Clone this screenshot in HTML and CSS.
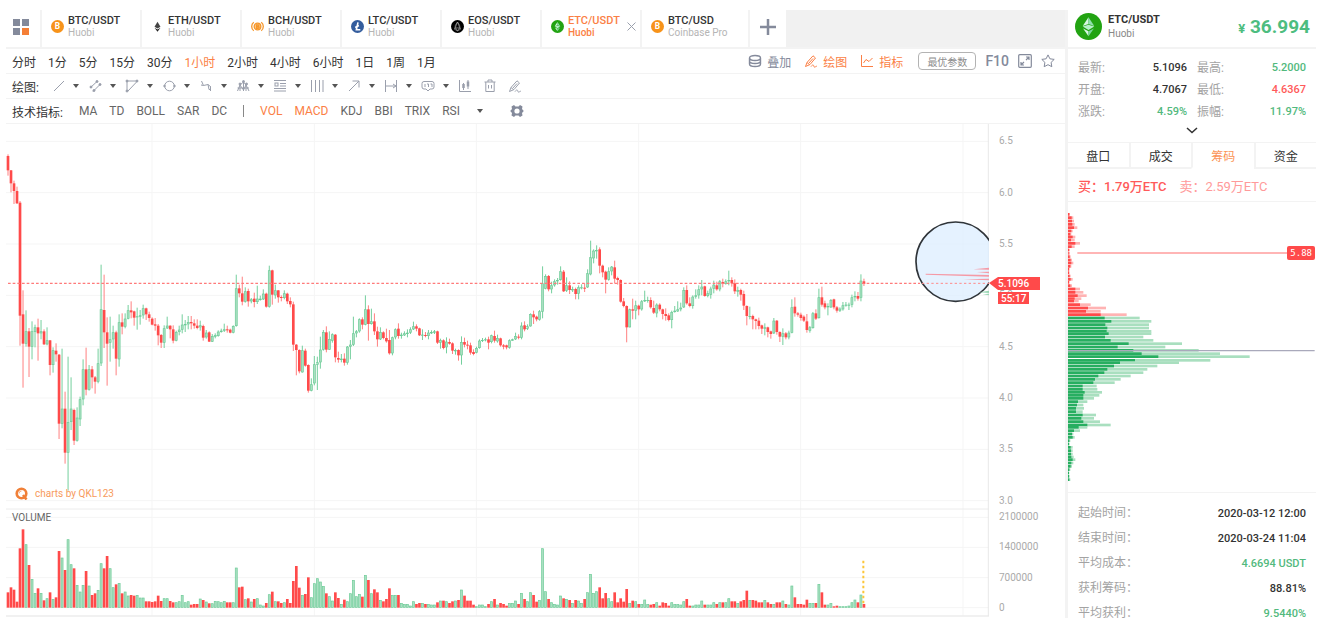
FILE: index.html
```html
<!DOCTYPE html>
<html lang="zh-CN">
<head>
    <meta charset="UTF-8">
    <meta name="viewport" content="width=device-width, initial-scale=1.0">
    <title>ETC/USDT Huobi</title>
    <link rel="stylesheet" href="styles.css">
</head>
<body>
    <!-- shared icons -->
    <svg class="sprite" aria-hidden="true">
        <symbol id="coin-etc" viewBox="0 0 28 28">
            <circle cx="14" cy="14" r="14" fill="#22a312"/>
            <path d="M14 4.500 8 13.500 14 11.500z" fill="#d9f7e4"/>
            <path d="M14 4.500 20 13.500 14 11.500z" fill="#8fe0ae"/>
            <path d="M8 14 14 12.200 20 14 14 17.500z" fill="#b7f0cb"/>
            <path d="M8.400 16 14 19 14 24z" fill="#d9f7e4"/>
            <path d="M19.600 16 14 19 14 24z" fill="#7bd69c"/>
        </symbol>
        <symbol id="pen" viewBox="0 0 14 14">
            <path d="M1.500 12.500 3 8.500 9 1.800 11.500 4 6 10.500 1.500 12.500M3 8.500 5.500 10.500M5 9 9 4.500M7 12.500c1.500-2 2.500-2 3 0s2-1 3 0" fill="none" stroke="currentColor"/>
        </symbol>
    </svg>

    <div class="app">
        <main class="main">
            <nav class="tabs">
                <button class="menu-btn" aria-label="菜单">
                    <svg width="18" height="18" viewBox="0 0 18 18">
                        <path d="M1 1h7v7H1zM10 1h7v7h-7zM1 10h7v7H1z" fill="#848a9b"/>
                        <path d="M10 10h7v7h-7z" fill="#f57f36"/>
                    </svg>
                </button>
                <div class="tab">
                    <svg class="coin" viewBox="0 0 14 14">
                        <circle cx="7" cy="7" r="7" fill="#f7931a"/>
                        <text class="coin-sign" x="7" y="10">B</text>
                    </svg>
                    <button class="pair">BTC/USDT<small>Huobi</small></button>
                </div>
                <div class="tab">
                    <svg class="coin" viewBox="0 0 14 14">
                        <path d="M7 2 10.200 7.300 7 9.200 3.800 7.300z" fill="#444"/>
                        <path d="M3.800 8.300 7 10.200 10.200 8.300 7 12.600z" fill="#222"/>
                    </svg>
                    <button class="pair">ETH/USDT<small>Huobi</small></button>
                </div>
                <div class="tab">
                    <svg class="coin" viewBox="0 0 14 14" fill="none" stroke="#f5962a" stroke-width="1.400">
                        <circle cx="7" cy="7" r="3.600" fill="#fbc98a"/>
                        <path d="M3 2.500C0 4.500 0 9.500 3 11.500M11 2.500C14 4.500 14 9.500 11 11.500M6 5.200h1.500a.8.8 0 0 1 0 1.800H6h1.800a.9.9 0 0 1 0 1.900H6z"/>
                    </svg>
                    <button class="pair">BCH/USDT<small>Huobi</small></button>
                </div>
                <div class="tab">
                    <svg class="coin" viewBox="0 0 14 14">
                        <circle cx="7" cy="7" r="7" fill="#345d9d"/>
                        <path d="M7.500 2.500 5.800 10.500H10M4.500 8 8.500 6" fill="none" stroke="#fff" stroke-width="1.700"/>
                    </svg>
                    <button class="pair">LTC/USDT<small>Huobi</small></button>
                </div>
                <div class="tab">
                    <svg class="coin" viewBox="0 0 14 14">
                        <circle cx="7" cy="7" r="7" fill="#000"/>
                        <path d="M7 2.200 4.800 5.500 4 10 7 11.800 10 10 9.200 5.500zM7 2.200 4 10M7 2.200 10 10M5 8.500 7 11.800 9 8.500z" fill="none" stroke="#bbb" stroke-width=".6"/>
                    </svg>
                    <button class="pair">EOS/USDT<small>Huobi</small></button>
                </div>
                <div class="tab active">
                    <svg class="coin"><use href="#coin-etc"/></svg>
                    <button class="pair">ETC/USDT<small>Huobi</small></button>
                    <button class="close" aria-label="关闭">
                        <svg width="9" height="9" viewBox="0 0 9 9"><path d="M.5.5l8 8M8.500.5l-8 8" stroke="#9a9fac"/></svg>
                    </button>
                </div>
                <div class="tab wide">
                    <svg class="coin" viewBox="0 0 14 14">
                        <circle cx="7" cy="7" r="7" fill="#f7931a"/>
                        <text class="coin-sign" x="7" y="10">B</text>
                    </svg>
                    <button class="pair">BTC/USD<small>Coinbase Pro</small></button>
                </div>
                <button class="add-btn" aria-label="添加">
                    <svg width="18" height="18" viewBox="0 0 18 18"><path d="M9 1v16M1 9h16" stroke="#848a9b" stroke-width="2.500"/></svg>
                </button>
            </nav>

            <div class="row">
                <div class="periods">
                    <button>分时</button>
                    <button>1分</button>
                    <button>5分</button>
                    <button>15分</button>
                    <button>30分</button>
                    <button class="active">1小时</button>
                    <button>2小时</button>
                    <button>4小时</button>
                    <button>6小时</button>
                    <button>1日</button>
                    <button>1周</button>
                    <button>1月</button>
                </div>
                <div class="tools">
                    <button class="tool">
                        <svg class="icon" viewBox="0 0 14 14" fill="none" stroke="currentColor" stroke-width="1.400">
                            <path d="M7 1.500C10 1.500 12.500 2.500 12.500 4S10 6.500 7 6.500 1.500 5.500 1.500 4 4 1.500 7 1.500zM1.500 4v6c0 1.500 2.500 2.500 5.500 2.500s5.500-1 5.500-2.500V4M1.500 7c0 1.500 2.500 2.500 5.500 2.500s5.500-1 5.500-2.500"/>
                        </svg>叠加
                    </button>
                    <button class="tool active"><svg class="icon"><use href="#pen"/></svg>绘图</button>
                    <button class="tool active">
                        <svg class="icon" viewBox="0 0 14 14" fill="none" stroke="currentColor">
                            <path d="M1.500 1v11.500H13M3.500 9 6 5.500l3 2L12.500 4"/>
                        </svg>指标
                    </button>
                    <button class="best">最优参数</button>
                    <button class="f10">F10</button>
                    <button aria-label="全屏">
                        <svg class="icon" viewBox="0 0 14 14" fill="none" stroke="currentColor" stroke-width="1.200">
                            <rect x=".7" y=".7" width="12.600" height="12.600" rx="1"/>
                            <path d="M8 3h3v3M11 3 8 6M6 11H3V8M3 11l3-3"/>
                        </svg>
                    </button>
                    <button aria-label="收藏">
                        <svg class="icon" viewBox="0 0 14 14" fill="none" stroke="currentColor">
                            <path d="M7 .9 8.900 4.800l4.300.6-3.100 3 .7 4.300L7 10.700l-3.800 2 .7-4.300-3.100-3 4.300-.6z"/>
                        </svg>
                    </button>
                </div>
            </div>

            <div class="row">
                <span class="label">绘图:</span>
                <div class="draw">
                    <button class="drop" aria-label="线段"><svg class="icon" viewBox="0 0 14 14"><path d="M3 12 13 2"/></svg></button>
                    <button class="drop" aria-label="平行线"><svg class="icon" viewBox="0 0 14 14"><path d="M2 9 9 2.500M5 12.500 12.500 5"/><circle cx="3" cy="8" r="1"/><circle cx="9" cy="2.500" r="1"/><circle cx="6" cy="11.500" r="1"/><circle cx="12" cy="5.500" r="1"/></svg></button>
                    <button class="drop" aria-label="三角形"><svg class="icon" viewBox="0 0 14 14"><path d="M2 12V2h10.500L3 12"/><circle cx="2" cy="2" r="1"/><circle cx="12" cy="2" r="1"/><circle cx="2" cy="12" r="1"/></svg></button>
                    <button class="drop" aria-label="圆"><svg class="icon" viewBox="0 0 14 14"><circle cx="7.500" cy="7" r="4.800" fill="none"/><circle cx="2.500" cy="7" r=".8"/><circle cx="12.500" cy="7" r=".8"/></svg></button>
                    <button class="drop" aria-label="波浪"><svg class="icon" viewBox="0 0 14 14"><path d="M2.500 2 4.500 6.500 9 5.500 10 10.500H12M2 6l2.500.5M9 5.500 12 8M11.500 8v4"/></svg></button>
                    <button class="drop" aria-label="形态"><svg class="icon" viewBox="0 0 14 14"><path d="M1.500 12 4 6l3.500 5L10 6l3 6M4 6 7.500 3 10 6M1.500 9H13M4 6v6M10 6v6M7.500 3v9"/><circle cx="7.500" cy="2.500" r="1"/><circle cx="4" cy="5" r="1"/><circle cx="10.500" cy="5" r="1"/></svg></button>
                    <button class="drop" aria-label="斐波那契"><svg class="icon" viewBox="0 0 14 14"><path d="M1 1.500h12M7 4.500h6M7 7h6M1 12h12M1 9.500h12"/><rect x="2" y="4" width="3" height="3" fill="none"/></svg></button>
                    <button class="drop" aria-label="周期线"><svg class="icon" viewBox="0 0 14 14"><path d="M1.500 1v12M5.500 1v12M9.500 1v12M13 1v12"/></svg></button>
                    <button class="drop" aria-label="箭头"><svg class="icon" viewBox="0 0 14 14"><path d="M2 12 12 2M5.500 2H12v6.500"/></svg></button>
                    <button class="drop" aria-label="测量"><svg class="icon" viewBox="0 0 14 14"><path d="M1.500 1v12M12.500 1v12M2 7h10M9 5l3 2-3 2"/></svg></button>
                    <button class="drop" aria-label="标注"><svg class="icon" viewBox="0 0 14 14"><path d="M3 2.500h8a2 2 0 0 1 2 2V8a2 2 0 0 1-2 2H9l-2 2-2-2H3a2 2 0 0 1-2-2V4.500a2 2 0 0 1 2-2zM4 5v3M6 5h1.500v3M9.500 5h1.500v3"/></svg></button>
                </div>
                <div class="draw-extra">
                    <button aria-label="K线标记"><svg class="icon" viewBox="0 0 14 14"><path d="M1.500 1v11.500H13M5.500 4v7M10 1v9"/><path d="M5.500 5v4M10 2.500v5" stroke-width="2.500"/></svg></button>
                    <button aria-label="删除"><svg class="icon" viewBox="0 0 14 14"><path d="M1.500 3h11M5 3V1h4v2M2.800 3v9.500h8.400V3M5.500 6v3.500M8.500 6v3.500"/></svg></button>
                    <button aria-label="画笔"><svg class="icon"><use href="#pen"/></svg></button>
                </div>
            </div>

            <div class="row">
                <span class="label">技术指标:</span>
                <div class="indicators">
                    <button>MA</button>
                    <button>TD</button>
                    <button>BOLL</button>
                    <button>SAR</button>
                    <button>DC</button>
                    <i class="bar"></i>
                    <button class="active">VOL</button>
                    <button class="active">MACD</button>
                    <button>KDJ</button>
                    <button>BBI</button>
                    <button>TRIX</button>
                    <button>RSI</button>
                    <button class="drop more" aria-label="更多"></button>
                    <button class="gear" aria-label="设置">
                        <svg class="icon" viewBox="0 0 14 14"><path d="M4 1 5.500 2.500h3L10 1l2.500 1.500-.5 2.500 1.800 2L12 9l.5 2.500L10 13 8.500 11.500h-3L4 13 1.500 11.500 2 9 .2 7 2 5 1.500 2.500z" fill="#848a9b"/><circle cx="7" cy="7" r="2.600" fill="#fff"/></svg>
                    </button>
                </div>
            </div>

            <div class="chart">
                <div class="plot">
                    <svg id="kline" viewBox="18 12 2949 1482" preserveAspectRatio="none"></svg>
                    <svg class="lens" viewBox="99 297 228 261">
                        <circle cx="227" cy="425" r="119" fill="#dceeff" fill-opacity=".75" stroke="#2f3439" stroke-width="5"/>
                        <path d="M137 461 327 465V470L137 464zM280 448 327 443V449zM290 456 327 455V460zM250 478 327 476V481z" fill="#f59aa6"/>
                        <path d="M297 517 327 512V519zM308 523 327 521V526z" fill="#9bd8b6"/>
                        <path d="M126 490H327" stroke="#ff8a8a" stroke-width="3" stroke-dasharray="7 7"/>
                    </svg>
                    <div class="brand">
                        <svg width="13" height="13" viewBox="0 0 13 13"><circle cx="6.500" cy="6.500" r="4.800" fill="none" stroke="#f08038" stroke-width="2.600"/><path d="M8 8l3.500 4.500" stroke="#f08038" stroke-width="2.600"/><path d="M4 6.500A2.500 2.500 0 0 1 6.500 4" fill="none" stroke="#f5a878"/></svg>
                        charts by QKL123
                    </div>
                    <span class="volume-title">VOLUME</span>
                </div>
                <svg class="axis" width="76" height="494">
                    <g id="axis-labels"></g>
                    <path d="M0 159 9 153H51V166H9z" fill="#ff4a4a"/>
                    <text class="tag" x="9" y="163">5.1096</text>
                    <path d="M9 168H40V180H9z" fill="#ff4a4a"/>
                    <text class="tag" x="12" y="178">55:17</text>
                </svg>
            </div>
        </main>

        <aside class="side">
            <header class="side-head">
                <svg class="logo"><use href="#coin-etc"/></svg>
                <div class="name">ETC/USDT<small>Huobi</small></div>
                <div class="price"><span>¥</span> 36.994</div>
            </header>

            <dl class="stats">
                <dt>最新:</dt><dd>5.1096</dd>
                <dt>最高:</dt><dd class="up">5.2000</dd>
                <dt>开盘:</dt><dd>4.7067</dd>
                <dt>最低:</dt><dd class="down">4.6367</dd>
                <dt>涨跌:</dt><dd class="up">4.59%</dd>
                <dt>振幅:</dt><dd class="up">11.97%</dd>
            </dl>
            <button class="expand" aria-label="展开">
                <svg width="12" height="7" viewBox="0 0 12 7"><path d="M1 1l5 4.500L11 1" fill="none" stroke="#333" stroke-width="1.500"/></svg>
            </button>

            <nav class="side-tabs">
                <button>盘口</button>
                <button>成交</button>
                <button class="active">筹码</button>
                <button>资金</button>
            </nav>
            <div class="deals">
                <span class="buy">买：1.79万ETC</span>
                <span class="sell">卖：2.59万ETC</span>
            </div>

            <div class="chips">
                <svg id="chips" viewBox="25 6 744 870" preserveAspectRatio="none"></svg>
                <span class="chip-tag">5.88</span>
            </div>

            <dl class="info">
                <dt>起始时间：</dt><dd>2020-03-12 12:00</dd>
                <dt>结束时间：</dt><dd>2020-03-24 11:04</dd>
                <dt>平均成本：</dt><dd class="up">4.6694 USDT</dd>
                <dt>获利筹码：</dt><dd>88.81%</dd>
                <dt>平均获利：</dt><dd class="up">9.5440%</dd>
            </dl>
        </aside>
    </div>

    <script src="script.js"></script>
</body>
</html>
```

FILE: styles.css
```css
* {
    box-sizing: border-box;
}

body {
    margin: 0;
    background: #fff;
    color: #333;
    font-family: Roboto, "Noto Sans CJK SC", sans-serif;
    font-size: 12px;
}

button {
    padding: 0;
    border: none;
    background: none;
    color: inherit;
    font: inherit;
    white-space: nowrap;
    cursor: pointer;
}

svg {
    display: block;
    flex: none;
}

.sprite {
    position: absolute;
    width: 0;
    height: 0;
}

.app {
    display: flex;
    height: 100vh;
    padding: 10px 10px 0 6px;
    overflow: hidden;
}

.main {
    flex: 1;
    min-width: 0;
}

/* market tabs */
.tabs {
    display: flex;
    height: 39px;
    background: #f1f1f1;
    border-bottom: 2px solid #f3f3f3;
}

.menu-btn,
.add-btn {
    display: flex;
    align-items: center;
    justify-content: center;
    width: 34px;
    padding-bottom: 4px;
    background: #fff;
}

.add-btn {
    width: 38px;
    border-left: 2px solid #f3f3f3;
}

.menu-btn {
    padding-right: 4px;
}

.tab {
    display: flex;
    align-items: center;
    flex: 0 0 100px;
    gap: 4px;
    padding: 0 4px 4px 9px;
    background: #fff;
    border-left: 2px solid #f3f3f3;
}

.tab.wide {
    flex-basis: 108px;
}

.coin {
    width: 13px;
    height: 13px;
}

.coin-sign {
    fill: #fff;
    font-size: 9px;
    font-weight: bold;
    text-anchor: middle;
}

.pair {
    font-size: 11px;
    font-weight: 500;
    line-height: 12px;
    text-align: left;
}

.pair small,
.name small {
    display: block;
    color: #b5b5b5;
    font-size: 10px;
    font-weight: normal;
}

.tab.active,
.tab.active small,
.active {
    color: #fb7f45;
}

.tab.active small {
    font-weight: 500;
}

.close {
    margin-left: auto;
}

/* toolbars */
.row {
    display: flex;
    align-items: center;
    height: 25px;
    padding: 0 10px 0 6px;
    border-bottom: 1px solid #f3f3f3;
}

.periods {
    display: flex;
    gap: 12px;
}

.tools {
    display: flex;
    align-items: center;
    gap: 9px;
    margin-left: auto;
    color: #848a9b;
}

.tool {
    display: flex;
    align-items: center;
    gap: 5px;
    margin-right: 4px;
}

.tools .active {
    color: #fb7f45;
}

.icon {
    width: 14px;
    height: 14px;
}

.best {
    height: 18px;
    margin-left: 2px;
    padding: 0 8px;
    border: 1px solid #b3b3b3;
    border-radius: 4px;
    color: #8c8c8c;
    font-size: 10px;
}

.f10 {
    font-size: 14px;
    font-weight: 500;
}

.draw,
.draw-extra {
    display: flex;
    gap: 9px;
    color: #9a9fac;
}

.draw {
    margin-left: 12px;
}

.draw-extra {
    gap: 11px;
    margin-left: 9px;
}

.draw .icon,
.draw-extra .icon {
    fill: #9a9fac;
    stroke: #9a9fac;
}

.draw .icon path,
.draw-extra .icon path {
    fill: none;
}

.drop {
    display: flex;
    align-items: center;
    gap: 8px;
}

.drop::after {
    content: "";
    border: 3px solid transparent;
    border-top: 4px solid #555;
    border-bottom: none;
}

.indicators {
    display: flex;
    align-items: center;
    gap: 12px;
    margin-left: 16px;
    color: #666;
}

.indicators .active {
    color: #fb7f45;
}

.bar {
    width: 1px;
    height: 12px;
    margin: 0 4px;
    background: #888;
}

.more {
    margin-left: 5px;
}

.gear {
    margin-left: 15px;
}

/* chart */
.chart {
    display: flex;
}

.plot {
    position: relative;
    flex: 1;
    min-width: 0;
    height: 494px;
}

#kline,
#chips {
    width: 100%;
    height: 100%;
}

.lens {
    position: absolute;
    top: 95px;
    right: 0;
    width: 76px;
    height: 87px;
}

.brand {
    position: absolute;
    left: 9px;
    bottom: 118px;
    display: flex;
    align-items: center;
    gap: 7px;
    color: #f79a5c;
    font-size: 10px;
}

.volume-title {
    position: absolute;
    left: 6px;
    bottom: 95px;
    color: #666;
    font-size: 10px;
}

.axis {
    font-size: 10px;
    fill: #aaa;
}

.axis .tag {
    fill: #fff;
    font-weight: 500;
}

/* right panel */
.side {
    flex: 0 0 251px;
    border-left: 3px solid #f3f3f3;
}

.side-head {
    display: flex;
    align-items: center;
    gap: 6px;
    height: 39px;
    padding: 0 6px 4px 7px;
    border-bottom: 2px solid #f3f3f3;
}

.logo {
    width: 27px;
    height: 27px;
}

.name {
    font-size: 11px;
    font-weight: bold;
    line-height: 14px;
}

.name small {
    color: #888;
}

.price {
    margin-left: auto;
    color: #4dbd7f;
    font-size: 19px;
    font-weight: bold;
}

.price span {
    font-size: 13px;
}

.up {
    color: #52b97d;
}

.down {
    color: #ff5a5a;
}

dl {
    display: grid;
    margin: 0;
}

dt {
    color: #a3a3a3;
}

dd {
    margin: 0;
    font-size: 11px;
    font-weight: 500;
    text-align: right;
}

.stats {
    grid-template-columns: auto 1fr auto 1fr;
    column-gap: 10px;
    padding: 8px 10px 0;
    line-height: 22px;
}

.expand {
    display: flex;
    align-items: center;
    justify-content: center;
    width: 100%;
    height: 19px;
    padding-bottom: 4px;
}

.side-tabs {
    display: flex;
    height: 27px;
    border-top: 1px solid #f3f3f3;
}

.side-tabs button {
    flex: 1;
    border-bottom: 2px solid #f3f3f3;
}

.side-tabs button + button {
    border-left: 2px solid #f3f3f3;
}

.side-tabs .active {
    border-bottom-color: #fff;
    color: #fb9455;
}

.deals {
    display: flex;
    align-items: center;
    gap: 13px;
    height: 33px;
    padding: 0 10px;
    border-bottom: 1px solid #f3f3f3;
    font-size: 13px;
}

.buy {
    color: #ff5a5a;
    font-weight: 500;
}

.sell {
    color: #ff9a9a;
}

.chips {
    position: relative;
    height: 291px;
    border-bottom: 1px solid #f3f3f3;
}

.chip-tag {
    position: absolute;
    top: 44px;
    right: 1px;
    padding: 0 3px;
    border-radius: 2px;
    background: #ff4a4a;
    color: #fff;
    font: 9px/14px "DejaVu Sans Mono", monospace;
}

.info {
    grid-template-columns: auto 1fr;
    padding: 8px 10px 0;
    line-height: 25px;
}
```

FILE: script.js
```javascript
// Each candle: high, open, close, low (chart units, y grows downwards)
const candles = `
103,108,151,167 150,151,190,217 182,190,213,252 200,213,250,252 243,248,587,677 511,583,671,803
571,671,634,680 624,634,680,771 604,680,634,718 614,636,622,682 596,622,640,722 600,640,634,658
628,634,673,675 622,673,661,676 660,661,735,766 682,735,691,758 670,692,703,725 702,704,911,957
686,911,866,925 815,866,998,1031 710,998,906,1112 772,906,866,930 866,870,962,975 862,962,893,965
830,898,838,918 718,838,748,856 683,748,809,826 735,809,748,812 738,748,772,805 768,772,785,821
686,785,730,790 434,730,568,738 464,570,637,684 592,637,671,797 590,668,658,725 617,658,637,686
632,637,716,766 583,718,607,740 580,607,620,643 580,620,596,625 555,596,571,598 544,571,577,595
572,574,593,617 563,592,589,629 570,590,586,614 554,586,565,596 563,565,583,600 575,583,594,605
592,596,614,616 594,613,617,632 612,617,646,676 642,645,668,684 616,668,625,684 590,625,617,627
616,617,628,655 616,628,662,670 632,662,636,664 617,636,629,646 583,629,614,640 600,616,612,636
588,613,606,628 588,606,610,628 598,610,617,626 598,617,624,628 602,622,616,632 614,618,653,662
630,652,638,656 634,637,665,666 642,665,648,666 640,650,645,655 631,648,635,650 626,636,632,638
611,632,628,636 617,628,630,638 626,629,638,640 616,638,618,640 464,618,505,620 494,505,520,532
470,520,545,556 502,545,514,548 506,513,544,560 534,544,538,550 518,536,546,562 497,546,536,552
527,540,536,542 508,538,521,540 518,521,560,563 437,560,451,563 449,451,524,554 494,526,511,536
510,511,532,548 526,531,534,544 511,534,520,538 518,521,544,552 532,543,553,562 545,553,674,693
672,674,690,766 688,690,754,760 677,757,691,758 686,692,737,740 733,735,812,818 775,812,793,814
708,790,733,796 710,734,727,810 650,727,689,746 630,689,636,692 619,637,689,697 634,689,657,690
640,662,643,668 642,644,712,727 695,714,719,728 702,720,716,727 700,716,728,737 678,728,680,734
660,680,674,718 590,674,640,678 630,640,634,652 595,634,598,638 592,598,614,628 526,614,568,616
556,568,612,662 566,612,604,614 580,604,634,645 620,634,658,680 622,658,636,660 634,637,654,658
626,654,664,668 630,660,700,704 650,700,652,706 625,652,628,658 610,626,648,656 638,648,644,656
634,646,640,648 628,642,638,652 622,638,628,642 605,628,619,630 613,619,626,634 623,625,646,648
628,646,644,660 636,645,648,652 630,648,638,658 631,640,636,642 630,638,634,642 632,634,668,672
656,668,660,686 658,661,684,688 652,682,665,700 656,666,671,674 667,670,692,702 686,694,690,704
688,690,706,722 649,706,666,734 653,666,674,682 662,674,676,688 668,676,698,704 688,696,702,706
680,698,684,700 658,684,662,686 654,662,660,666 653,661,658,664 650,658,668,688 644,666,646,670
632,648,662,668 644,664,654,668 653,655,676,680 672,676,680,688 674,676,682,688 658,683,661,686
656,662,658,662 638,658,648,660 643,650,652,658 607,653,617,658 604,616,628,634 613,626,619,630
580,619,582,620 572,583,592,612 587,590,598,604 570,599,574,602 439,575,490,595 463,506,468,508
465,468,508,514 485,508,496,520 478,496,484,500 474,484,480,494 439,480,454,482 450,455,514,516
472,512,496,516 484,496,510,522 500,511,507,516 503,507,522,538 496,521,502,538 493,504,502,508
490,503,504,516 448,502,460,504 362,463,412,466 388,415,392,430 376,394,390,416 382,388,437,460
434,437,457,472 452,455,479,520 442,479,454,482 438,454,440,466 422,442,476,490 470,474,480,494
478,480,545,548 534,544,558,562 556,558,622,667 566,622,568,622 536,568,572,598 542,572,556,598
554,557,568,586 540,568,544,572 512,544,540,546 530,541,540,548 532,540,562,566 542,564,578,582
550,580,554,592 550,554,568,574 566,568,582,598 565,582,588,602 580,586,600,604 572,600,576,625
558,576,572,578 544,574,568,576 548,568,563,574 502,562,510,564 496,510,550,554 532,550,558,562
526,558,530,566 508,530,526,536 496,526,508,536 480,508,500,526 497,499,528,530 512,528,520,532
500,524,506,536 482,506,494,520 485,496,508,512 480,508,484,514 476,486,492,502 478,492,484,494
452,484,480,496 472,480,490,500 478,490,514,522 500,515,510,530 506,510,524,542 512,522,557,570
556,558,588,616 560,590,588,598 584,588,598,628 596,598,603,628 593,602,618,628 614,616,626,642
610,626,622,646 620,622,636,652 632,634,642,656 594,640,602,642 600,602,636,644 634,636,650,666
625,650,640,675 636,640,652,658 632,652,638,658 538,638,562,640 532,560,580,590 576,580,584,590
578,584,594,602 586,590,602,606 582,604,630,638 618,632,622,638 576,624,580,626 568,580,596,600
506,594,532,596 500,532,554,560 542,550,562,568 550,562,558,586 537,562,540,564 536,538,562,568
558,562,572,578 562,572,566,576 546,568,556,572 546,556,554,560 548,555,554,570 524,554,532,562
514,532,528,544 516,528,536,542 463,533,482,544 476,484,492,498
`.trim().split(/\s+/).map(c => c.split(',').map(Number));

const volumes = [
    46,61,54,18,178,235,190,128,86,44,58,44,22,28,46,26,31,170,150,113,205,130,118,68,48,68,110,66,38,43,
    53,133,118,155,118,61,70,74,43,48,36,38,36,38,30,30,19,19,17,19,36,20,28,28,20,16,16,19,38,16,
    19,9,11,11,27,23,18,13,13,20,19,16,20,16,16,16,120,61,63,25,28,18,26,28,9,6,14,40,48,19,
    19,14,16,26,14,80,125,60,38,41,91,31,73,88,78,65,43,34,21,46,29,11,24,19,43,83,34,41,33,98,
    83,43,55,46,23,19,26,58,38,38,38,14,11,11,6,19,11,14,14,11,11,9,9,16,21,21,19,14,19,21,
    23,54,36,21,21,9,4,9,9,4,11,19,26,9,14,11,6,14,14,21,11,44,26,19,46,38,18,23,178,49,
    26,16,11,9,36,28,26,23,14,23,21,14,26,46,101,44,49,61,28,44,28,19,46,16,28,18,56,14,21,19,
    11,11,24,11,9,11,16,6,16,14,6,16,11,11,9,19,26,6,6,9,9,21,9,9,9,16,11,16,16,16,
    28,19,19,14,19,23,51,23,23,21,16,16,23,16,11,11,16,16,21,11,9,66,31,11,11,9,24,14,14,14,
    71,46,9,9,14,4,6,4,4,4,6,16,24,16,39,11
];

const RED = '#ff4a4a';
const VOLUME_BASE = 1463;

function line(x1, y1, x2, y2, color, width) {
    return `<line x1="${x1}" y1="${y1}" x2="${x2}" y2="${y2}" stroke="${color}" stroke-width="${width}"/>`;
}

function bar(x, y, h, up) {
    if (up) {
        return `<rect x="${x - 3}" y="${y + 1}" width="6" height="${Math.max(h - 2, 1)}" fill="#a9dfc1" stroke="#6ccb97" stroke-width="2"/>`;
    }
    return `<rect x="${x - 4}" y="${y}" width="8" height="${Math.max(h, 3)}" fill="${RED}"/>`;
}

// K line and volume
let out = '';
[64, 218, 372, 526, 680, 834, 988, 1142, 1192, 1282, 1373, 1463].forEach(y => {
    out += line(18, y, 2967, y, '#f5f5f5', 3);
});
[456, 943, 1429, 1916, 2402, 2889].forEach(x => {
    out += line(x, 12, x, 1488, '#f5f5f5', 3);
});
out += line(18, 1167, 2967, 1167, '#ececec', 3);
out += line(18, 1488, 2967, 1488, '#ececec', 4);
out += line(2965, 12, 2965, 1488, '#e8e8e8', 3);

candles.forEach(([high, open, close, low], i) => {
    const x = 24 + i * 9.01;
    const up = close < open;
    out += line(x, high, x, low, up ? '#74cf9d' : '#ff8080', 3);
    out += bar(x, Math.min(open, close), Math.abs(close - open), up);
    out += bar(x, VOLUME_BASE - volumes[i], volumes[i], up);
});
out += `<path d="M24 490H2760" stroke="#ff7a7a" stroke-width="4" stroke-dasharray="8 6"/>`;
out += `<path d="M2590 1322V1450" stroke="#fcc63a" stroke-width="6" stroke-dasharray="8 7"/>`;
document.getElementById('kline').innerHTML = out;

// Price and volume axis
const labels = [
    ['6.5', 17], ['6.0', 69], ['5.5', 120], ['5.0', 171], ['4.5', 223], ['4.0', 274], ['3.5', 325], ['3.0', 377],
    ['2100000', 393], ['1400000', 423], ['700000', 454], ['0', 484]
];
document.getElementById('axis-labels').innerHTML =
    labels.map(([text, y]) => `<text x="10" y="${y + 3}">${text}</text>`).join('');

// Chip distribution: y, inner, outer
const redChips = `43,4,6 53,11,16 63,12,18 73,13,20 83,18,28 93,10,14 103,7,10 111,14,22 120,9,20 130,22,36 140,11,20
150,3,6 160,2,6 170,5,8 180,8,12 189,10,16 199,7,10 208,3,5 218,3,5 228,5,8 238,8,14 247,3,5 257,7,12 267,22,36
277,22,46 287,29,56 296,20,40 303,18,32 314,36,68 324,60,114 334,54,98 344,98,176`;
const greenChips = `354,110,215 364,130,250 374,112,243 384,118,243 394,116,250 401,122,250 411,111,226 421,128,256
431,182,342 441,149,292 451,196,392 461,221,456 470,271,545 481,201,427 488,156,333 498,138,268 508,118,238
518,109,226 528,91,188 538,81,158 548,76,140 558,44,86 568,44,88 577,50,102 586,46,94 595,46,78 605,30,58
615,27,46 625,24,48 635,24,44 645,44,84 655,40,78 665,46,96 675,58,128 682,32,58 692,18,36 702,12,16 712,14,20
722,4,7 732,3,5 742,8,14 752,9,14 762,9,14 771,10,17 779,14,22 789,10,16 799,8,12 809,4,7 819,3,4 829,3,5 839,4,7`;

function chips(data, inner, outer) {
    return data.split(/\s+/).map(row => {
        const [y, a, b] = row.split(',').map(Number);
        return `<rect x="25" y="${y - 4}" width="${b}" height="8" fill="${outer}"/>` +
            `<rect x="25" y="${y - 4}" width="${a}" height="8" fill="${inner}"/>`;
    }).join('');
}

document.getElementById('chips').innerHTML =
    chips(redChips, RED, '#ffb3b3') +
    chips(greenChips, '#27ae60', '#a9dfbf') +
    line(53, 159, 700, 159, '#ff9c9c', 4) +
    line(25, 452, 765, 452, '#a9a9bb', 4);
```
